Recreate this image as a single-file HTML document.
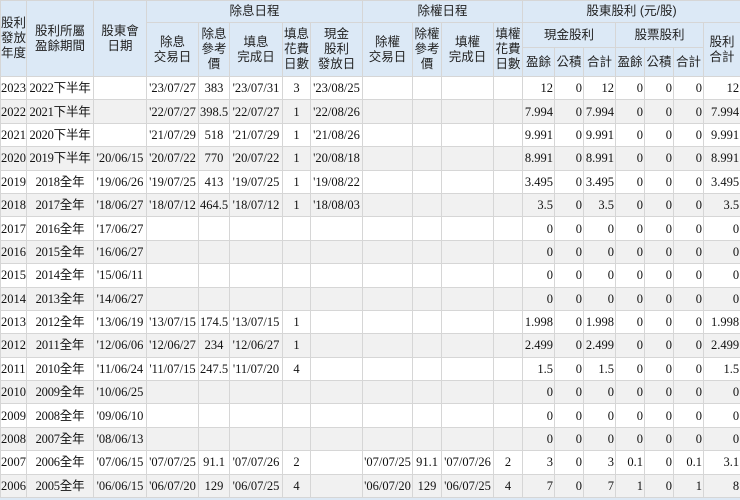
<!DOCTYPE html>
<html><head><meta charset="utf-8"><style>
html,body{margin:0;padding:0;width:740px;height:500px;overflow:hidden;background:#dce8f4;}
table{border-collapse:collapse;table-layout:fixed;width:740px;position:absolute;left:0;top:0;}
td,th{border:1px solid #d6d6d6;padding:0;overflow:hidden;white-space:nowrap;}
th{background:#dce9f6;font-family:"Liberation Sans","Noto Sans CJK TC",sans-serif;font-weight:normal;font-size:12.5px;color:#222;line-height:15px;white-space:normal;text-align:center;vertical-align:middle;}
td{font-family:"Liberation Serif","Noto Sans CJK TC",serif;font-size:12.5px;line-height:14px;color:#111;height:22.4px;text-align:center;background:#fff;}
td.c{letter-spacing:-0.2px;}
tr.g td{background:#f1f1f1;}
td.r{text-align:right;padding-right:1px;}
td.y{text-align:left;}
</style></head><body>
<table>
<colgroup>
<col style="width:26px"><col style="width:67px"><col style="width:53px"><col style="width:52px"><col style="width:31px"><col style="width:53px"><col style="width:28px"><col style="width:52px"><col style="width:50px"><col style="width:29px"><col style="width:52px"><col style="width:29px"><col style="width:32px"><col style="width:29px"><col style="width:32px"><col style="width:29px"><col style="width:29px"><col style="width:30px"><col style="width:37px">
</colgroup>
<tr style="height:22px"><th rowspan="3" style="text-align:left">股利<br>發放<br>年度</th><th rowspan="3">股利所屬<br>盈餘期間</th><th rowspan="3">股東會<br>日期</th><th colspan="5">除息日程</th><th colspan="4">除權日程</th><th colspan="7">股東股利 (元/股)</th></tr>
<tr style="height:25px"><th rowspan="2">除息<br>交易日</th><th rowspan="2">除息<br>參考<br>價</th><th rowspan="2">填息<br>完成日</th><th rowspan="2">填息<br>花費<br>日數</th><th rowspan="2">現金<br>股利<br>發放日</th><th rowspan="2">除權<br>交易日</th><th rowspan="2">除權<br>參考<br>價</th><th rowspan="2">填權<br>完成日</th><th rowspan="2">填權<br>花費<br>日數</th><th colspan="3">現金股利</th><th colspan="3">股票股利</th><th rowspan="2">股利<br>合計</th></tr>
<tr style="height:29px"><th>盈餘</th><th>公積</th><th>合計</th><th>盈餘</th><th>公積</th><th>合計</th></tr>
<tr><td class="y">2023</td><td class="c">2022下半年</td><td></td><td>'23/07/27</td><td>383</td><td>'23/07/31</td><td>3</td><td>'23/08/25</td><td></td><td></td><td></td><td></td><td class="r">12</td><td class="r">0</td><td class="r">12</td><td class="r">0</td><td class="r">0</td><td class="r">0</td><td class="r">12</td></tr>
<tr class="g"><td class="y">2022</td><td class="c">2021下半年</td><td></td><td>'22/07/27</td><td>398.5</td><td>'22/07/27</td><td>1</td><td>'22/08/26</td><td></td><td></td><td></td><td></td><td class="r">7.994</td><td class="r">0</td><td class="r">7.994</td><td class="r">0</td><td class="r">0</td><td class="r">0</td><td class="r">7.994</td></tr>
<tr><td class="y">2021</td><td class="c">2020下半年</td><td></td><td>'21/07/29</td><td>518</td><td>'21/07/29</td><td>1</td><td>'21/08/26</td><td></td><td></td><td></td><td></td><td class="r">9.991</td><td class="r">0</td><td class="r">9.991</td><td class="r">0</td><td class="r">0</td><td class="r">0</td><td class="r">9.991</td></tr>
<tr class="g"><td class="y">2020</td><td class="c">2019下半年</td><td>'20/06/15</td><td>'20/07/22</td><td>770</td><td>'20/07/22</td><td>1</td><td>'20/08/18</td><td></td><td></td><td></td><td></td><td class="r">8.991</td><td class="r">0</td><td class="r">8.991</td><td class="r">0</td><td class="r">0</td><td class="r">0</td><td class="r">8.991</td></tr>
<tr><td class="y">2019</td><td class="c">2018全年</td><td>'19/06/26</td><td>'19/07/25</td><td>413</td><td>'19/07/25</td><td>1</td><td>'19/08/22</td><td></td><td></td><td></td><td></td><td class="r">3.495</td><td class="r">0</td><td class="r">3.495</td><td class="r">0</td><td class="r">0</td><td class="r">0</td><td class="r">3.495</td></tr>
<tr class="g"><td class="y">2018</td><td class="c">2017全年</td><td>'18/06/27</td><td>'18/07/12</td><td>464.5</td><td>'18/07/12</td><td>1</td><td>'18/08/03</td><td></td><td></td><td></td><td></td><td class="r">3.5</td><td class="r">0</td><td class="r">3.5</td><td class="r">0</td><td class="r">0</td><td class="r">0</td><td class="r">3.5</td></tr>
<tr><td class="y">2017</td><td class="c">2016全年</td><td>'17/06/27</td><td></td><td></td><td></td><td></td><td></td><td></td><td></td><td></td><td></td><td class="r">0</td><td class="r">0</td><td class="r">0</td><td class="r">0</td><td class="r">0</td><td class="r">0</td><td class="r">0</td></tr>
<tr class="g"><td class="y">2016</td><td class="c">2015全年</td><td>'16/06/27</td><td></td><td></td><td></td><td></td><td></td><td></td><td></td><td></td><td></td><td class="r">0</td><td class="r">0</td><td class="r">0</td><td class="r">0</td><td class="r">0</td><td class="r">0</td><td class="r">0</td></tr>
<tr><td class="y">2015</td><td class="c">2014全年</td><td>'15/06/11</td><td></td><td></td><td></td><td></td><td></td><td></td><td></td><td></td><td></td><td class="r">0</td><td class="r">0</td><td class="r">0</td><td class="r">0</td><td class="r">0</td><td class="r">0</td><td class="r">0</td></tr>
<tr class="g"><td class="y">2014</td><td class="c">2013全年</td><td>'14/06/27</td><td></td><td></td><td></td><td></td><td></td><td></td><td></td><td></td><td></td><td class="r">0</td><td class="r">0</td><td class="r">0</td><td class="r">0</td><td class="r">0</td><td class="r">0</td><td class="r">0</td></tr>
<tr><td class="y">2013</td><td class="c">2012全年</td><td>'13/06/19</td><td>'13/07/15</td><td>174.5</td><td>'13/07/15</td><td>1</td><td></td><td></td><td></td><td></td><td></td><td class="r">1.998</td><td class="r">0</td><td class="r">1.998</td><td class="r">0</td><td class="r">0</td><td class="r">0</td><td class="r">1.998</td></tr>
<tr class="g"><td class="y">2012</td><td class="c">2011全年</td><td>'12/06/06</td><td>'12/06/27</td><td>234</td><td>'12/06/27</td><td>1</td><td></td><td></td><td></td><td></td><td></td><td class="r">2.499</td><td class="r">0</td><td class="r">2.499</td><td class="r">0</td><td class="r">0</td><td class="r">0</td><td class="r">2.499</td></tr>
<tr><td class="y">2011</td><td class="c">2010全年</td><td>'11/06/24</td><td>'11/07/15</td><td>247.5</td><td>'11/07/20</td><td>4</td><td></td><td></td><td></td><td></td><td></td><td class="r">1.5</td><td class="r">0</td><td class="r">1.5</td><td class="r">0</td><td class="r">0</td><td class="r">0</td><td class="r">1.5</td></tr>
<tr class="g"><td class="y">2010</td><td class="c">2009全年</td><td>'10/06/25</td><td></td><td></td><td></td><td></td><td></td><td></td><td></td><td></td><td></td><td class="r">0</td><td class="r">0</td><td class="r">0</td><td class="r">0</td><td class="r">0</td><td class="r">0</td><td class="r">0</td></tr>
<tr><td class="y">2009</td><td class="c">2008全年</td><td>'09/06/10</td><td></td><td></td><td></td><td></td><td></td><td></td><td></td><td></td><td></td><td class="r">0</td><td class="r">0</td><td class="r">0</td><td class="r">0</td><td class="r">0</td><td class="r">0</td><td class="r">0</td></tr>
<tr class="g"><td class="y">2008</td><td class="c">2007全年</td><td>'08/06/13</td><td></td><td></td><td></td><td></td><td></td><td></td><td></td><td></td><td></td><td class="r">0</td><td class="r">0</td><td class="r">0</td><td class="r">0</td><td class="r">0</td><td class="r">0</td><td class="r">0</td></tr>
<tr><td class="y">2007</td><td class="c">2006全年</td><td>'07/06/15</td><td>'07/07/25</td><td>91.1</td><td>'07/07/26</td><td>2</td><td></td><td>'07/07/25</td><td>91.1</td><td>'07/07/26</td><td>2</td><td class="r">3</td><td class="r">0</td><td class="r">3</td><td class="r">0.1</td><td class="r">0</td><td class="r">0.1</td><td class="r">3.1</td></tr>
<tr class="g"><td class="y">2006</td><td class="c">2005全年</td><td>'06/06/15</td><td>'06/07/20</td><td>129</td><td>'06/07/25</td><td>4</td><td></td><td>'06/07/20</td><td>129</td><td>'06/07/25</td><td>4</td><td class="r">7</td><td class="r">0</td><td class="r">7</td><td class="r">1</td><td class="r">0</td><td class="r">1</td><td class="r">8</td></tr>
</table>
</body></html>
